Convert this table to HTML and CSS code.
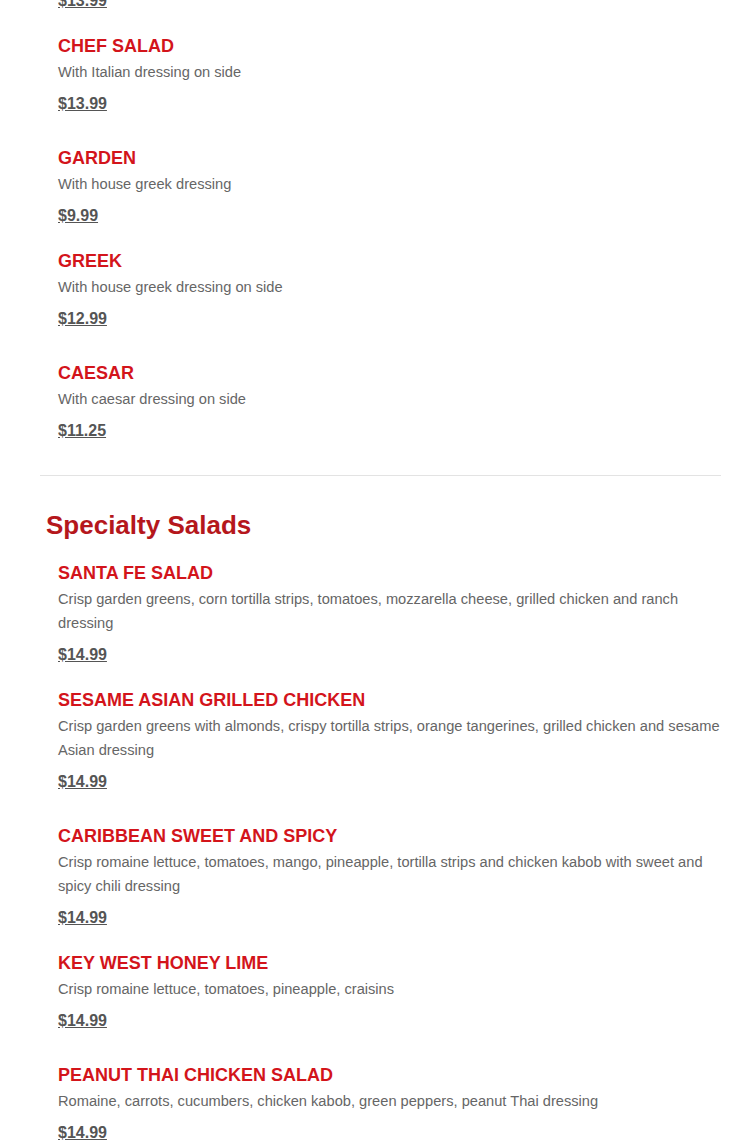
FILE: index.html
```html
<!DOCTYPE html>
<html lang="en">
<head>
<meta charset="utf-8">
<title>Salads</title>
<link rel="stylesheet" href="styles.css">
</head>
<body>
<main class="menu">
  <section class="group">
    <div class="items">
      <div class="item item-partial">
        <a class="price" href="#">$13.99</a>
      </div>
      <div class="item">
        <h3 class="title">CHEF SALAD</h3>
        <p class="desc">With Italian dressing on side</p>
        <a class="price" href="#">$13.99</a>
      </div>
      <div class="item">
        <h3 class="title">GARDEN</h3>
        <p class="desc">With house greek dressing</p>
        <a class="price" href="#">$9.99</a>
      </div>
      <div class="item">
        <h3 class="title">GREEK</h3>
        <p class="desc">With house greek dressing on side</p>
        <a class="price" href="#">$12.99</a>
      </div>
      <div class="item">
        <h3 class="title">CAESAR</h3>
        <p class="desc">With caesar dressing on side</p>
        <a class="price" href="#">$11.25</a>
      </div>
    </div>
    <div class="divider"></div>
  </section>

  <section class="group">
    <h2 class="group-title">Specialty Salads</h2>
    <div class="items">
      <div class="item">
        <h3 class="title">SANTA FE SALAD</h3>
        <p class="desc">Crisp garden greens, corn tortilla strips, tomatoes, mozzarella cheese, grilled chicken and ranch dressing</p>
        <a class="price" href="#">$14.99</a>
      </div>
      <div class="item">
        <h3 class="title">SESAME ASIAN GRILLED CHICKEN</h3>
        <p class="desc">Crisp garden greens with almonds, crispy tortilla strips, orange tangerines, grilled chicken and sesame Asian dressing</p>
        <a class="price" href="#">$14.99</a>
      </div>
      <div class="item">
        <h3 class="title">CARIBBEAN SWEET AND SPICY</h3>
        <p class="desc">Crisp romaine lettuce, tomatoes, mango, pineapple, tortilla strips and chicken kabob with sweet and spicy chili dressing</p>
        <a class="price" href="#">$14.99</a>
      </div>
      <div class="item">
        <h3 class="title">KEY WEST HONEY LIME</h3>
        <p class="desc">Crisp romaine lettuce, tomatoes, pineapple, craisins</p>
        <a class="price" href="#">$14.99</a>
      </div>
      <div class="item">
        <h3 class="title">PEANUT THAI CHICKEN SALAD</h3>
        <p class="desc">Romaine, carrots, cucumbers, chicken kabob, green peppers, peanut Thai dressing</p>
        <a class="price" href="#">$14.99</a>
      </div>
    </div>
  </section>
</main>
</body>
</html>
```

FILE: styles.css
```css
html, body {
  margin: 0;
  padding: 0;
  background: #ffffff;
}

body {
  font-family: "Liberation Sans", Arial, sans-serif;
  overflow: hidden;
}

.menu {
  padding: 0 20px 0 40px;
}

.group-title {
  margin: 34px 0 23px 6px;
  font-size: 26px;
  line-height: 30px;
  font-weight: bold;
  color: #b5171c;
}

.items {
  display: flex;
  flex-direction: column;
  padding-left: 18px;
}

.item {
  display: flex;
  flex-direction: column;
  align-items: flex-start;
  margin-bottom: 25.5px;
}

.item-partial {
  margin-top: -19px;
}

.item:nth-child(even) {
  margin-bottom: 34.5px;
}

.items .item:last-child {
  margin-bottom: 0;
}

.title {
  margin: 0;
  font-size: 18px;
  line-height: 20px;
  font-weight: bold;
  color: #d3141b;
}

.desc {
  margin: 4px 0 0;
  font-size: 14.65px;
  line-height: 24px;
  color: #666666;
}

.price {
  margin-top: 9.5px;
  font-size: 16px;
  line-height: 20px;
  font-weight: bold;
  color: #555555;
  text-decoration: underline;
}

.group:first-child .items {
  padding-bottom: 34.5px;
}

.divider {
  height: 1px;
  margin-right: 9px;
  background: #e3e3e3;
}
```
